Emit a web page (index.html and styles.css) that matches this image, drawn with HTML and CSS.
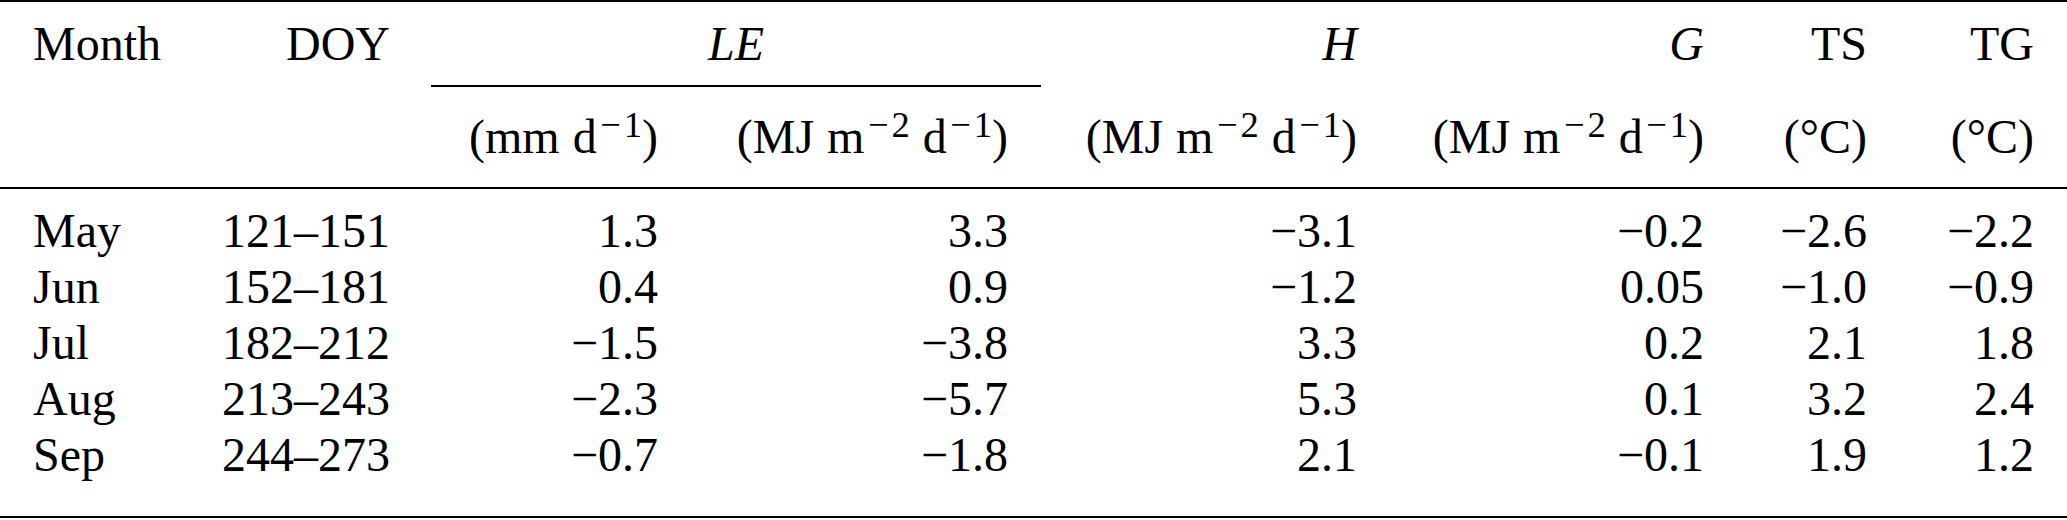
FILE: index.html
```html
<!DOCTYPE html>
<html lang="en">
  <head>
    <meta charset="UTF-8" />
    <meta name="viewport" content="width=device-width, initial-scale=1.0" />
    <title>Monthly energy fluxes</title>

    <link rel="stylesheet" href="styles.css">
  </head>

  <body>
    <table class="flux-table">
      <colgroup>
        <col class="col-month">
        <col class="col-doy">
        <col class="col-mm">
        <col class="col-le">
        <col class="col-h">
        <col class="col-g">
        <col class="col-ts">
        <col class="col-tg">
      </colgroup>
      <thead>
        <tr class="head-top">
          <th class="month">Month</th>
          <th>DOY</th>
          <th colspan="2" class="group"><i>LE</i></th>
          <th><i>H</i></th>
          <th><i>G</i></th>
          <th>TS</th>
          <th>TG</th>
        </tr>
        <tr class="head-units">
          <th class="month"></th>
          <th></th>
          <th>(mm<span class="sp"></span>d<sup><span class="neg">&minus;</span>1</sup>)</th>
          <th>(MJ<span class="sp"></span>m<sup><span class="neg">&minus;</span>2</sup><span class="sp"></span>d<sup><span class="neg">&minus;</span>1</sup>)</th>
          <th>(MJ<span class="sp"></span>m<sup><span class="neg">&minus;</span>2</sup><span class="sp"></span>d<sup><span class="neg">&minus;</span>1</sup>)</th>
          <th>(MJ<span class="sp"></span>m<sup><span class="neg">&minus;</span>2</sup><span class="sp"></span>d<sup><span class="neg">&minus;</span>1</sup>)</th>
          <th>(&deg;C)</th>
          <th>(&deg;C)</th>
        </tr>
      </thead>
      <tbody>
        <tr>
          <td class="month">May</td>
          <td>121&ndash;151</td>
          <td>1.3</td>
          <td>3.3</td>
          <td>&minus;3.1</td>
          <td>&minus;0.2</td>
          <td>&minus;2.6</td>
          <td>&minus;2.2</td>
        </tr>
        <tr>
          <td class="month">Jun</td>
          <td>152&ndash;181</td>
          <td>0.4</td>
          <td>0.9</td>
          <td>&minus;1.2</td>
          <td>0.05</td>
          <td>&minus;1.0</td>
          <td>&minus;0.9</td>
        </tr>
        <tr>
          <td class="month">Jul</td>
          <td>182&ndash;212</td>
          <td>&minus;1.5</td>
          <td>&minus;3.8</td>
          <td>3.3</td>
          <td>0.2</td>
          <td>2.1</td>
          <td>1.8</td>
        </tr>
        <tr>
          <td class="month">Aug</td>
          <td>213&ndash;243</td>
          <td>&minus;2.3</td>
          <td>&minus;5.7</td>
          <td>5.3</td>
          <td>0.1</td>
          <td>3.2</td>
          <td>2.4</td>
        </tr>
        <tr>
          <td class="month">Sep</td>
          <td>244&ndash;273</td>
          <td>&minus;0.7</td>
          <td>&minus;1.8</td>
          <td>2.1</td>
          <td>&minus;0.1</td>
          <td>1.9</td>
          <td>1.2</td>
        </tr>
      </tbody>
    </table>
  </body>
</html>
```

FILE: styles.css
```css
* {
  margin: 0;
  padding: 0;
  box-sizing: border-box;
}

body {
  background: #fff;
  color: #000;
  font-family: "Liberation Serif", "Times New Roman", serif;
  font-size: 48px;
}

.flux-table {
  width: 2067px;
  table-layout: fixed;
  border-collapse: separate;
  border-spacing: 0;
  border-top: 2px solid #000;
  border-bottom: 2px solid #000;
}

/* column widths follow the rules of the printed table */
.col-month { width: 200px; }
.col-doy { width: 231px; }
.col-mm { width: 260px; }
.col-le { width: 350px; }
.col-h { width: 349px; }
.col-g { width: 347px; }
.col-ts { width: 163px; }
.col-tg { width: 167px; }

.flux-table th,
.flux-table td {
  font-weight: normal;
  text-align: right;
  vertical-align: baseline;
  white-space: nowrap;
  padding-right: 33px;
}

.flux-table th:nth-child(2),
.flux-table td:nth-child(2) {
  padding-right: 41px;
}

.flux-table .month {
  text-align: left;
  padding-left: 33px;
}

.head-top th {
  line-height: 48px;
  padding-top: 18px;
  padding-bottom: 17px;
}

.head-top .group {
  text-align: center;
  padding-right: 0;
  border-bottom: 2px solid #000;
}

.head-units th {
  line-height: 48px;
  padding-top: 26px;
  padding-bottom: 26px;
  border-bottom: 2px solid #000;
}

/* unit exponents, set a little wider like the math font */
.sp {
  display: inline-block;
  width: 0.27em;
}

sup {
  font-size: 0.76em;
  line-height: 0;
  vertical-align: 16px;
}

.neg {
  display: inline-block;
  padding: 0 0.08em 0 0.1em;
}

.flux-table tbody td {
  line-height: 56px;
}

.flux-table tbody tr:first-child td {
  padding-top: 14px;
}

.flux-table tbody tr:last-child td {
  padding-bottom: 33px;
}
```
